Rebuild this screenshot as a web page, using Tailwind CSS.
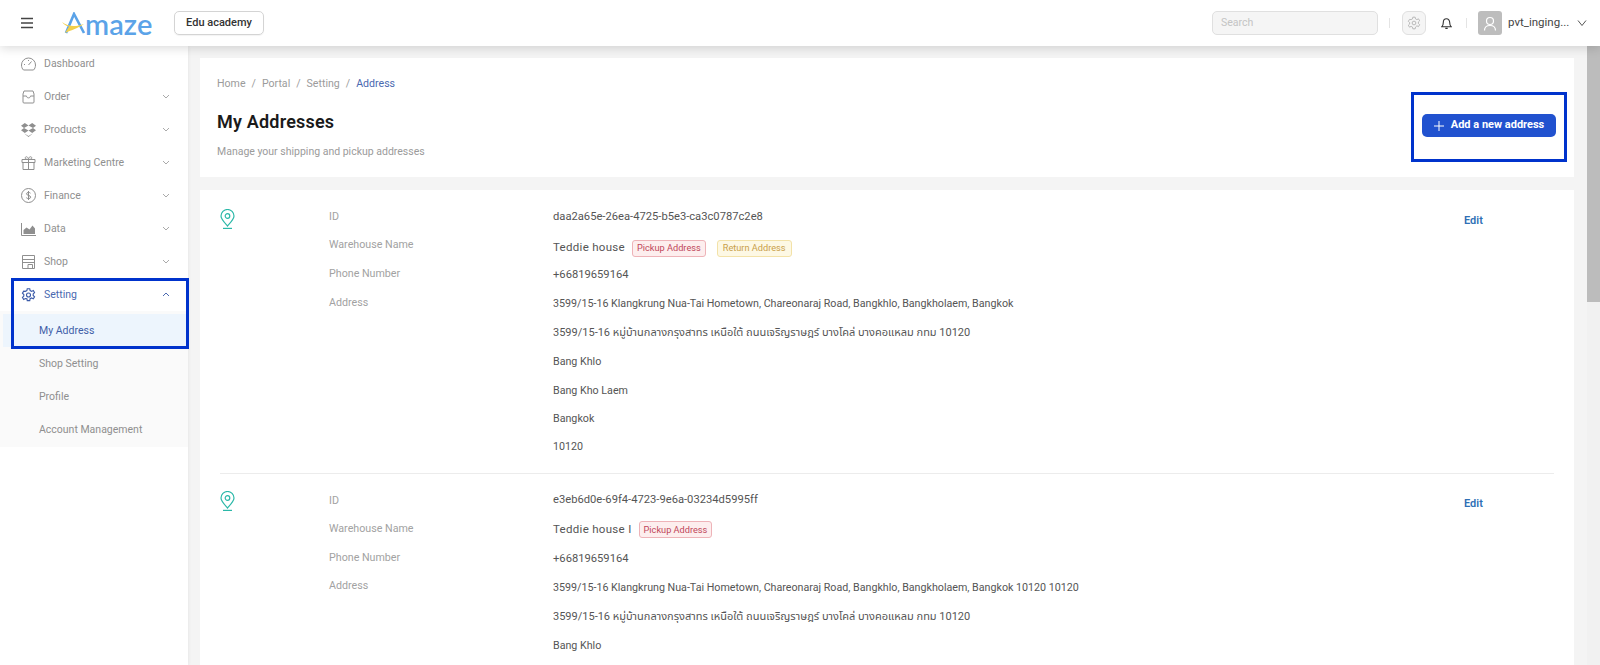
<!DOCTYPE html>
<html lang="en">
<head>
<meta charset="utf-8">
<script src="https://cdn.jsdelivr.net/npm/@tailwindcss/browser@4"></script>
</head>
<body class="relative w-[1600px] h-[665px] overflow-hidden bg-[#f4f4f4] font-['Roboto','Noto_Sans_Thai','Noto_Sans',sans-serif] text-[10.7px]">
<header class="relative z-20 h-[46px] bg-white flex items-center shadow-[0_2px_10px_rgba(0,0,0,0.15)]">
  <div class="w-[62px] pl-[21px]">
    <svg class="w-[12px] h-[12px]" viewBox="0 0 12 12" fill="none" stroke="#444" stroke-width="1.300"><path d="M0 1.500h12M0 6h12M0 10.500h12"/></svg>
  </div>
  <div class="w-[112px] flex items-center h-[30px]">
    <svg class="w-[24px] h-[22px] shrink-0" viewBox="0 0 24 22" fill="none"><path d="M4 21 L12 2 L22 21" stroke="#5ba3e8" stroke-width="2.600"/><path d="M0 10 C6 15 14 15 22 12 C15 17 9 18 3 21 L7 14.500 C4 14 2 12.500 0 10Z" fill="#f2cf4a"/></svg>
    <span class="font-['Lato'] text-[29px] leading-none text-[#5ba3e8] font-semibold -ml-[1px] tracking-[0.1px]">maze</span>
  </div>
  <div class="w-[90px] h-[24px] border border-[#d4d4d4] rounded-[5px] flex items-center justify-center font-medium text-[#333] text-[11px] shadow-[0_1px_1px_rgba(0,0,0,0.05)]">Edu academy</div>
  <div class="ml-auto flex items-center">
    <div class="w-[166px] h-[24px] rounded-[5px] border border-[#e0e0e0] bg-[#f5f5f5] text-[#c4c4c4] text-[10.5px] flex items-center pl-[8px]">Search</div>
    <div class="w-px h-[10px] bg-[#e4e4e4] ml-[11px]"></div>
    <div class="w-[24px] h-[24px] ml-[12px] rounded-[6px] border border-[#e0e0e0] bg-[#f5f5f5] flex items-center justify-center">
      <svg class="w-[14px] h-[14px]" viewBox="0 0 24 24" fill="none" stroke="#b5b5b5" stroke-width="1.600"><circle cx="12" cy="12" r="3.200"/><path d="M10 2h4l.6 3 2.400 1.200 2.700-1.400 2 3.400-2.200 2v2.600l2.200 2-2 3.400-2.700-1.400L14.600 19 14 22h-4l-.6-3L7 17.800l-2.700 1.400-2-3.400 2.200-2v-2.600l-2.200-2 2-3.400L7 6.200 9.400 5z"/></svg>
    </div>
    <div class="ml-[15px] w-[12px]">
      <svg class="w-[11px] h-[13px]" viewBox="0 0 12 13" fill="none" stroke="#333" stroke-width="1.200"><path d="M1 10h10c-1-1-1.500-2-1.500-4.500C9.500 3 8 1.300 6 1.300S2.500 3 2.500 5.500C2.500 8 2 9 1 10zM4.700 11.800h2.600"/></svg>
    </div>
    <div class="w-px h-[10px] bg-[#e4e4e4] ml-[13px]"></div>
    <div class="w-[24px] h-[24px] ml-[11px] rounded-[3px] bg-[#bdbdbd] flex items-center justify-center">
      <svg class="w-[14px] h-[15px]" viewBox="0 0 14 15" fill="none" stroke="#fff" stroke-width="1.200"><circle cx="7" cy="5" r="3.500"/><path d="M1.500 14.500c0-3 2.200-5 5.500-5s5.500 2 5.500 5"/></svg>
    </div>
    <span class="ml-[6px] text-[#444] text-[11.500px] w-[63px] whitespace-nowrap">pvt_inging...</span>
    <svg class="ml-[6px] mr-[13px] w-[10px] h-[6px]" viewBox="0 0 10 6" fill="none" stroke="#555" stroke-width="1"><path d="M1 .5l4 5 4-5"/></svg>
  </div>
</header>

<div class="flex h-[619px]">
  <aside class="relative z-10 w-[188px] shrink-0 bg-white text-[#8f8f8f] text-[10.5px] pt-[1px] shadow-[1px_0_3px_rgba(0,0,0,0.05)]">
    <nav class="flex flex-col">
      <div class="h-[33px] flex items-center pl-[21px]">
        <svg class="w-[15px] h-[14px] mr-[8px]" viewBox="0 0 15 14" fill="none" stroke="#8f8f8f"><path d="M2.500 13C1.200 11.800.5 10 .5 8a7 7 0 0 1 14 0c0 2-.7 3.800-2 5z"/><path d="M7.500 8l3-3.500M3 7.500h1M7.500 3v1"/></svg>
        <span>Dashboard</span>
      </div>
      <div class="h-[33px] flex items-center pl-[21px]">
        <svg class="w-[15px] h-[14px] mr-[8px]" viewBox="0 0 15 14" fill="none" stroke="#8f8f8f"><path d="M3 1h9l1 3v8a1 1 0 0 1-1 1H3a1 1 0 0 1-1-1V4z"/><path d="M2 6h3.500c0 2.500 4 2.500 4 0H13"/></svg>
        <span>Order</span>
        <svg class="ml-auto mr-[18px] w-[8px] h-[5px]" viewBox="0 0 8 5" fill="none" stroke="#aaa"><path d="M1 1l3 3 3-3"/></svg>
      </div>
      <div class="h-[33px] flex items-center pl-[21px]">
        <svg class="w-[15px] h-[14px] mr-[8px]" viewBox="0 0 15 14" fill="#8f8f8f"><path d="M3.800 0L0 2.700l3 2.300L7.500 2.500zM11.200 0L7.500 2.500 12 5l3-2.300zM0 7.300L3.800 10l3.700-2.500L3 5zM15 7.300L12 5 7.500 7.500l3.700 2.500zM3.500 10.800L7.500 14l4-3.200-.3-.1-3.700 2.300-3.700-2.300z"/></svg>
        <span>Products</span>
        <svg class="ml-auto mr-[18px] w-[8px] h-[5px]" viewBox="0 0 8 5" fill="none" stroke="#aaa"><path d="M1 1l3 3 3-3"/></svg>
      </div>
      <div class="h-[33px] flex items-center pl-[21px]">
        <svg class="w-[15px] h-[14px] mr-[8px]" viewBox="0 0 15 14" fill="none" stroke="#8f8f8f"><path d="M1 3.500h13v3H1zM2 6.500h11v7H2zM7.500 3.500v10M7.500 3.500C5 3.500 3.500 2.500 4.500 1.200S7.500 1.500 7.500 3.500c0-2 2-3.600 3-2.300s-.5 2.300-3 2.300z"/></svg>
        <span>Marketing Centre</span>
        <svg class="ml-auto mr-[18px] w-[8px] h-[5px]" viewBox="0 0 8 5" fill="none" stroke="#aaa"><path d="M1 1l3 3 3-3"/></svg>
      </div>
      <div class="h-[33px] flex items-center pl-[21px]">
        <svg class="w-[15px] h-[15px] mr-[8px]" viewBox="0 0 15 15" fill="none" stroke="#8f8f8f"><circle cx="7.500" cy="7.500" r="7"/><path d="M9.500 5.200C9 4.200 5.500 4 5.500 5.800c0 2 4.200 1.200 4.200 3.400 0 1.800-3.700 1.600-4.400.5M7.500 3v9"/></svg>
        <span>Finance</span>
        <svg class="ml-auto mr-[18px] w-[8px] h-[5px]" viewBox="0 0 8 5" fill="none" stroke="#aaa"><path d="M1 1l3 3 3-3"/></svg>
      </div>
      <div class="h-[33px] flex items-center pl-[21px]">
        <svg class="w-[15px] h-[14px] mr-[8px]" viewBox="0 0 15 14" fill="none"><path d="M.5 1v12.500H15" stroke="#8f8f8f"/><path d="M2.500 12V8l3-2.500 3 2 3-4 2.500 3V12z" fill="#8f8f8f"/></svg>
        <span>Data</span>
        <svg class="ml-auto mr-[18px] w-[8px] h-[5px]" viewBox="0 0 8 5" fill="none" stroke="#aaa"><path d="M1 1l3 3 3-3"/></svg>
      </div>
      <div class="h-[33px] flex items-center pl-[21px]">
        <svg class="w-[15px] h-[14px] mr-[8px]" viewBox="0 0 15 14" fill="none" stroke="#8f8f8f"><path d="M1.500.5h12v13h-12zM1.500 4.500h12M1.500 7.500h12M7 13.500v-4h4.500v4"/></svg>
        <span>Shop</span>
        <svg class="ml-auto mr-[18px] w-[8px] h-[5px]" viewBox="0 0 8 5" fill="none" stroke="#aaa"><path d="M1 1l3 3 3-3"/></svg>
      </div>
      <div class="h-[33px] flex items-center pl-[21px] text-[#4a69b0]">
        <svg class="w-[15px] h-[16px] mr-[8px]" viewBox="0 0 24 24" fill="none" stroke="#3a5aa8" stroke-width="1.800"><circle cx="12" cy="12" r="3.200"/><path d="M10 2h4l.6 3 2.400 1.200 2.700-1.400 2 3.400-2.200 2v2.600l2.200 2-2 3.400-2.700-1.400-2.400 1.200-.6 3h-4l-.6-3L7 17.800l-2.700 1.400-2-3.400 2.200-2v-2.600l-2.200-2 2-3.400L7 6.200 9.400 5z"/></svg>
        <span>Setting</span>
        <svg class="ml-auto mr-[18px] w-[8px] h-[5px]" viewBox="0 0 8 5" fill="none" stroke="#4a69b0"><path d="M1 4l3-3 3 3"/></svg>
      </div>
      <div class="bg-[#fafafa] pt-[3px] pb-[1px] flex flex-col">
        <div class="h-[33px] ml-[3px] pl-[36px] flex items-center bg-[#edf5fd] text-[#3f5ea8]">My Address</div>
        <div class="h-[33px] pl-[39px] flex items-center">Shop Setting</div>
        <div class="h-[33px] pl-[39px] flex items-center">Profile</div>
        <div class="h-[33px] pl-[39px] flex items-center">Account Management</div>
      </div>
    </nav>
  </aside>

  <main class="flex-1 pl-[12px] pr-[13px] pt-[12px] flex flex-col gap-[13px] overflow-hidden">
    <section class="h-[119px] shrink-0 bg-white flex pl-[17px] pr-[18px]">
      <div class="flex-1 flex flex-col">
        <div class="pt-[19px] text-[#9b9b9b] text-[10.6px] leading-[14px] flex gap-[6px]"><span>Home</span><span>/</span><span>Portal</span><span>/</span><span>Setting</span><span>/</span><span class="text-[#4a69b0]">Address</span></div>
        <h1 class="mt-[19px] text-[18px] leading-[24px] font-semibold text-[#1a1a1a] tracking-[0.2px]">My Addresses</h1>
        <p class="mt-[11px] text-[#9b9b9b] text-[10.5px] leading-[14px]">Manage your shipping and pickup addresses</p>
      </div>
      <div class="pt-[56px]">
        <button class="w-[134px] h-[23px] rounded-[5px] bg-[#2152cf] text-white font-bold flex items-center justify-center gap-[7px] text-[11px]">
          <svg class="w-[10px] h-[10px]" viewBox="0 0 10 10" fill="none" stroke="#fff"><path d="M5 0v10M0 5h10"/></svg>
          Add a new address
        </button>
      </div>
    </section>

    <section class="flex-1 bg-white px-[20px] pt-[16px] shrink-0 text-[#555]">
      <article class="flex pb-[13px] border-b border-[#ececec]">
        <div class="w-[109px] pt-[3px]">
          <svg class="w-[15px] h-[20px]" viewBox="0 0 15 20" fill="none" stroke="#2bb8a8" stroke-width="1.200"><path d="M7.500 17C4 13 1 10 1 7a6.500 6.500 0 0 1 13 0c0 3-3 6-6.500 10z"/><circle cx="7.500" cy="7" r="2.300"/><path d="M3 19.400h9"/></svg>
        </div>
        <div class="w-[224px] text-[#a2a2a2]">
          <div class="h-[28px] leading-[22px]">ID</div>
          <div class="h-[29px] leading-[22px]">Warehouse Name</div>
          <div class="h-[29px] leading-[22px]">Phone Number</div>
          <div class="h-[29px] leading-[22px]">Address</div>
        </div>
        <div class="flex-1">
          <div class="h-[28px] leading-[22px] text-[11.200px]">daa2a65e-26ea-4725-b5e3-ca3c0787c2e8</div>
          <div class="h-[29px] flex items-center gap-[7px] pb-[1px]">
            <span class="text-[11.500px] tracking-[0.3px]">Teddie house</span>
            <span class="h-[17px] px-[4px] flex items-center rounded-[3px] border border-[#eeb3b8] bg-[#fdeeee] text-[#c0475a] text-[9.200px]">Pickup Address</span>
            <span class="ml-[4px] h-[17px] px-[5px] flex items-center rounded-[3px] border border-[#f3e2a8] bg-[#fdf8e4] text-[#c9a04a] text-[9.200px]">Return Address</span>
          </div>
          <div class="h-[29px] leading-[24px] text-[11.200px]">+66819659164</div>
          <div class="h-[29px] leading-[24px]">3599/15-16 Klangkrung Nua-Tai Hometown, Chareonaraj Road, Bangkhlo, Bangkholaem, Bangkok</div>
          <div class="h-[29px] leading-[24px] text-[11px]">3599/15-16 หมู่บ้านกลางกรุงสาทร เหนือใต้ ถนนเจริญราษฎร์ บางโคล่ บางคอแหลม กทม 10120</div>
          <div class="h-[29px] leading-[24px]">Bang Khlo</div>
          <div class="h-[28px] leading-[24px]">Bang Kho Laem</div>
          <div class="h-[28px] leading-[24px]">Bangkok</div>
          <div class="h-[25px] leading-[24px]">10120</div>
        </div>
        <div class="w-[90px] pt-[8px] font-semibold text-[#2f6fb5] text-[11px] leading-[14px]">Edit</div>
      </article>
      <article class="flex pt-[16px]">
        <div class="w-[109px] pt-[1px]">
          <svg class="w-[15px] h-[20px]" viewBox="0 0 15 20" fill="none" stroke="#2bb8a8" stroke-width="1.200"><path d="M7.500 17C4 13 1 10 1 7a6.500 6.500 0 0 1 13 0c0 3-3 6-6.500 10z"/><circle cx="7.500" cy="7" r="2.300"/><path d="M3 19.400h9"/></svg>
        </div>
        <div class="w-[224px] text-[#a2a2a2]">
          <div class="h-[28px] leading-[22px]">ID</div>
          <div class="h-[29px] leading-[22px]">Warehouse Name</div>
          <div class="h-[28px] leading-[22px]">Phone Number</div>
          <div class="h-[29px] leading-[22px]">Address</div>
        </div>
        <div class="flex-1">
          <div class="h-[26px] leading-[20px] text-[11.200px]">e3eb6d0e-69f4-4723-9e6a-03234d5995ff</div>
          <div class="h-[31px] flex items-center gap-[7px] pb-[4px]">
            <span class="text-[11.500px] tracking-[0.3px]">Teddie house I</span>
            <span class="h-[17px] px-[4px] flex items-center rounded-[3px] border border-[#eeb3b8] bg-[#fdeeee] text-[#c0475a] text-[9.200px]">Pickup Address</span>
          </div>
          <div class="h-[29px] leading-[24px] text-[11.200px]">+66819659164</div>
          <div class="h-[29px] leading-[24px]">3599/15-16 Klangkrung Nua-Tai Hometown, Chareonaraj Road, Bangkhlo, Bangkholaem, Bangkok 10120 10120</div>
          <div class="h-[29px] leading-[24px] text-[11px]">3599/15-16 หมู่บ้านกลางกรุงสาทร เหนือใต้ ถนนเจริญราษฎร์ บางโคล่ บางคอแหลม กทม 10120</div>
          <div class="h-[24px] leading-[24px]">Bang Khlo</div>
        </div>
        <div class="w-[90px] pt-[7px] font-semibold text-[#2f6fb5] text-[11px] leading-[14px]">Edit</div>
      </article>
    </section>
  </main>

  <div class="w-[13px] shrink-0 bg-[#f1f1f1]">
    <div class="h-[256px] bg-[#bcbcbc]"></div>
  </div>
</div>

<div class="absolute z-30 left-[11px] top-[278px] w-[178px] h-[71px] border-[3px] border-[#0033cc] pointer-events-none"></div>
<div class="absolute z-30 left-[1411px] top-[92px] w-[156px] h-[70px] border-[3px] border-[#0033cc] pointer-events-none"></div>
</body>
</html>
